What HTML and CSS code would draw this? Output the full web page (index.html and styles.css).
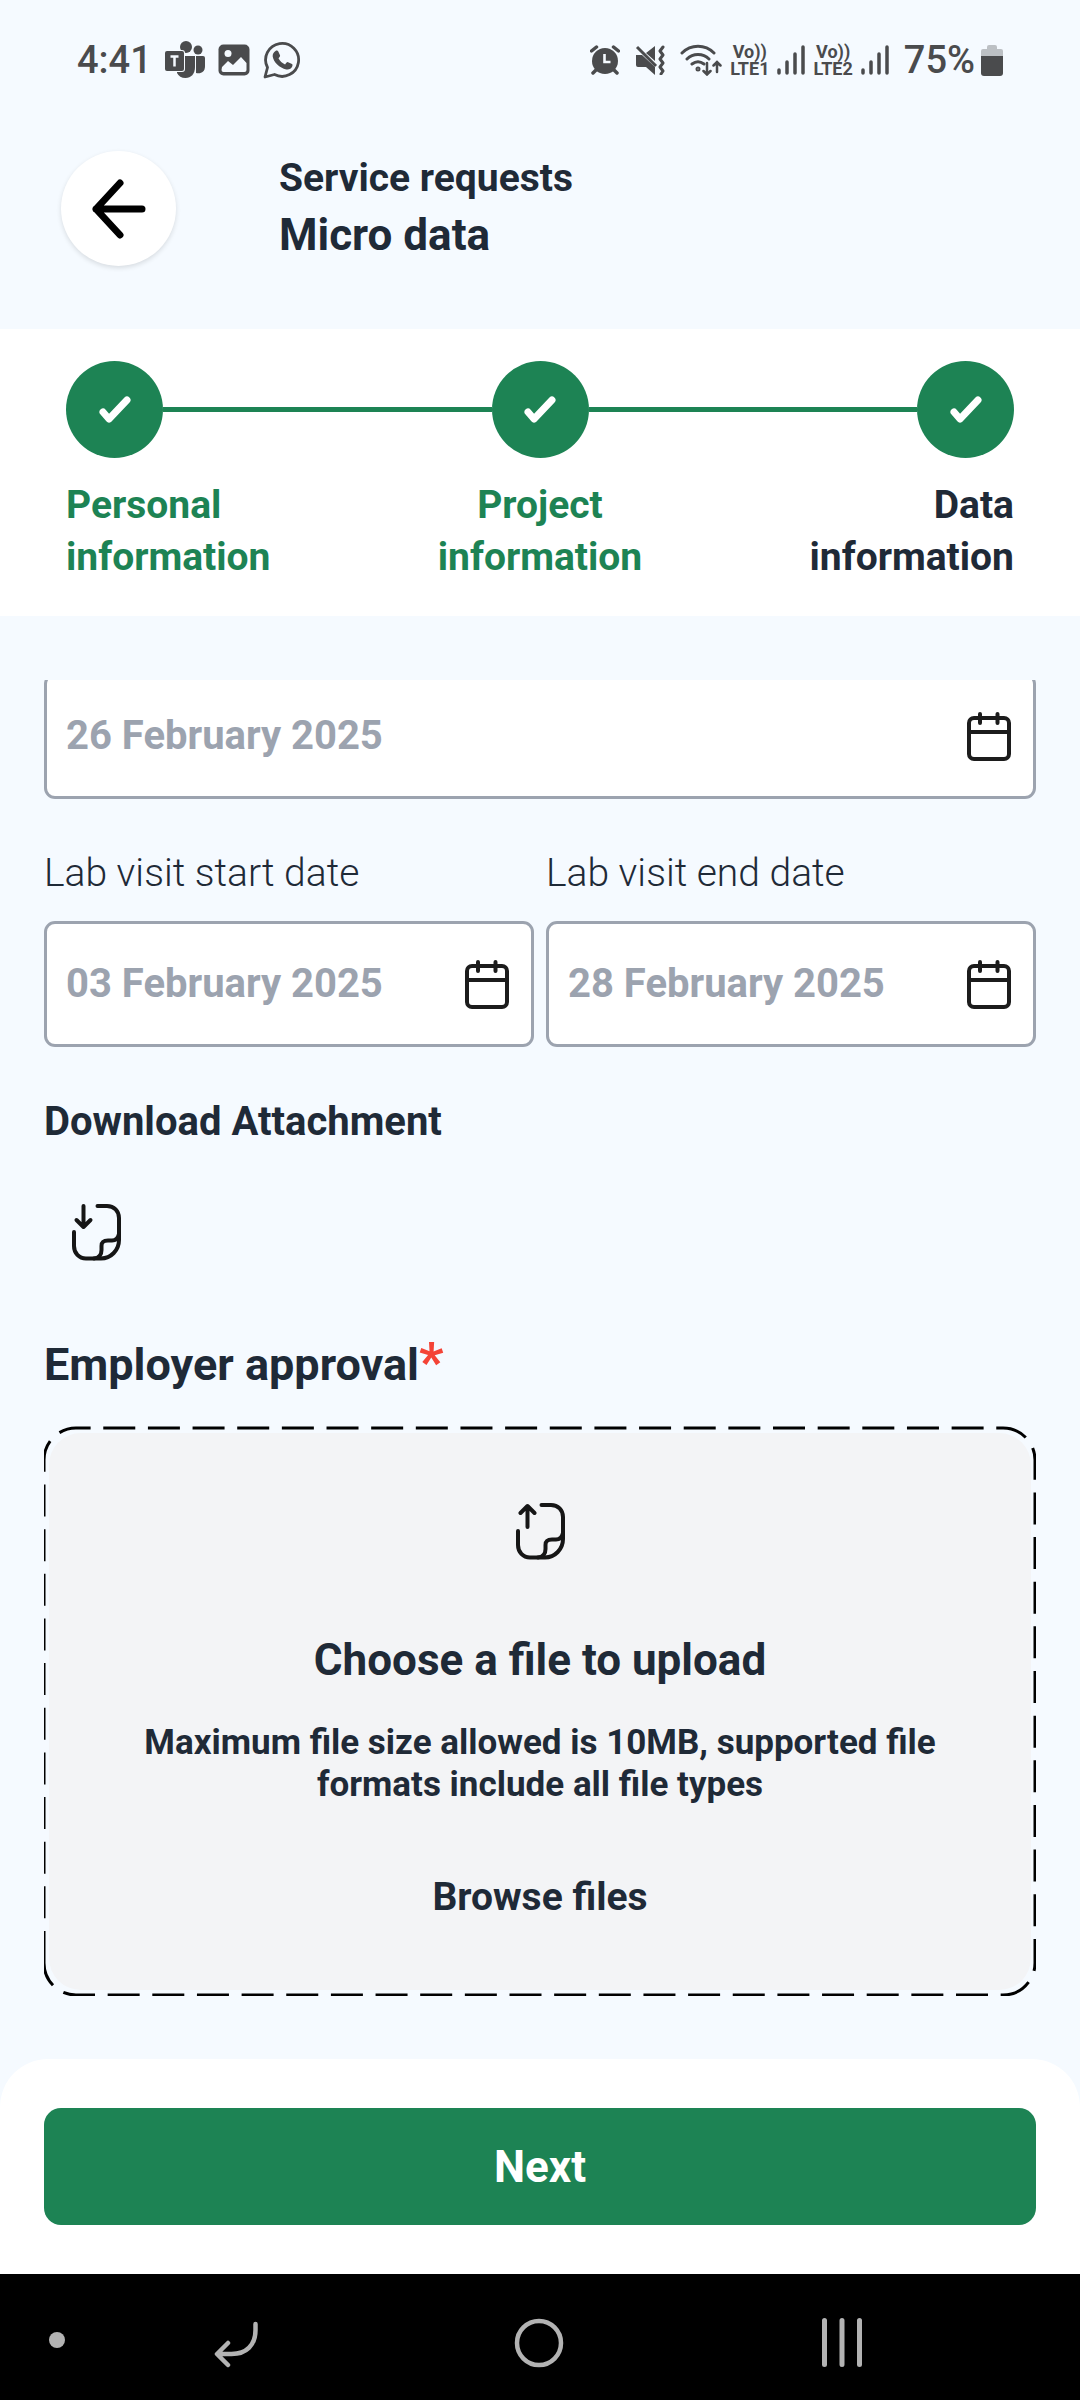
FILE: index.html
```html
<!DOCTYPE html>
<html lang="en">
<head>
  <meta charset="UTF-8">
  <meta name="viewport" content="width=device-width, initial-scale=1">
  <title>Service requests - Micro data</title>
  <link rel="stylesheet" href="styles.css">
</head>
<body>

  <!-- status bar -->
  <div class="status-bar">
    <div class="status-left">
      <span class="status-text">4:41</span>
      <svg width="40" height="38" viewBox="0 0 40 38" fill="#4a4b4d">
        <circle cx="21" cy="6" r="6"/>
        <circle cx="33" cy="9" r="4.500"/>
        <path d="M31 15h7a2 2 0 0 1 2 2v8c0 6-4 8-9 7z"/>
        <path d="M12 15h18v11c0 7-4 11-9.500 11-4 0-7-2-8.500-5z"/>
        <rect x="-1" y="9" width="21" height="22" rx="3" fill="#f5faff"/>
        <rect x="0" y="10" width="19" height="20" rx="2"/>
        <path d="M5.500 15.500h8M9.500 15.500v10" stroke="#f5faff" stroke-width="2.500" fill="none"/>
      </svg>
      <svg width="32" height="32" viewBox="0 0 32 32">
        <rect x="0.500" y="0.500" width="31" height="31" rx="5" fill="#4a4b4d"/>
        <circle cx="10" cy="9.500" r="3.500" fill="#f5faff"/>
        <path d="M4 23l6-6 5 4 8-8 5.500 6v7a2 2 0 0 1-2 2h-21a2 2 0 0 1-2-2z" fill="#f5faff"/>
      </svg>
      <svg width="38" height="38" viewBox="0 0 38 38">
        <path d="M2 36l2.500-9.500A16.500 16.500 0 1 1 11.500 33.500z" fill="none" stroke="#4a4b4d" stroke-width="2.800" stroke-linejoin="round"/>
        <path d="M12.500 10c1-.7 2.300-.6 2.800.4l1.700 3.800c.3.800-.1 1.400-1.500 3.100 1.500 3 3.600 4.900 6.600 6.100 1.600-1.900 2.100-2.600 3-2.200l3.900 1.900c.7.400.7 1.200.2 2.500-.8 2.200-3.500 3.300-5.900 2.800C16.500 27 10.500 21 9.700 15.500c-.3-2.200 1.100-4.400 2.800-5.500z" fill="#4a4b4d"/>
      </svg>
    </div>
    <div class="status-right">
      <svg width="30" height="30" viewBox="0 0 30 30">
        <circle cx="15" cy="16" r="13" fill="#4a4b4d"/>
        <path d="M1.500 6l5-4M28.500 6l-5-4M6 25l-3 3M24 25l3 3" stroke="#4a4b4d" stroke-width="3.500" stroke-linecap="round"/>
        <path d="M14.500 9v8h6" stroke="#f5faff" stroke-width="2.600" fill="none"/>
      </svg>
      <svg width="30" height="30" viewBox="0 0 30 30">
        <path d="M1 10h6l13 12v8l-9-8H3a2 2 0 0 1-2-2zM20 1v15l-9-8z" fill="#4a4b4d"/>
        <path d="M2 2l19 19" stroke="#4a4b4d" stroke-width="3"/>
        <path d="M28 2l-3 4 3 4-3 4 3 4-3 4 3 4-2 3" fill="none" stroke="#4a4b4d" stroke-width="3" stroke-linejoin="round" stroke-linecap="round"/>
      </svg>
      <div class="network">
        <svg width="42" height="32" viewBox="0 0 42 32" fill="none" stroke="#4a4b4d" stroke-width="3" stroke-linecap="round">
          <path d="M2 9C11 0 25 0 34 9M7 15c6-6 16-6 22 0M12 20c4-3 8-3 12 0"/>
          <circle cx="18" cy="25" r="1"/>
          <path d="M27 19v11M23.500 27l3.500 3.500 3.500-3.500M37 28V18M33.500 21.500L37 18l3.500 3.500" stroke-width="2.500"/>
        </svg>
        <span class="volte">Vo))<br>LTE1</span>
        <svg width="28" height="30" viewBox="0 0 28 30" stroke="#4a4b4d" stroke-width="3.500" stroke-linecap="round">
          <path d="M2 25v3M10 17v11M18 9v19M26 2v26"/>
        </svg>
        <span class="volte">Vo))<br>LTE2</span>
        <svg width="28" height="30" viewBox="0 0 28 30" stroke="#4a4b4d" stroke-width="3.500" stroke-linecap="round">
          <path d="M2 25v3M10 17v11M18 9v19M26 2v26"/>
        </svg>
      </div>
      <div class="battery">
        <span class="status-text">75%</span>
        <svg width="22" height="31" viewBox="0 0 22 31">
          <path d="M6 4V2a2 2 0 0 1 2-2h6a2 2 0 0 1 2 2v2h4a2 2 0 0 1 2 2v5H0V6a2 2 0 0 1 2-2z" fill="#bcc0c4"/>
          <path d="M0 11h22v17a3 3 0 0 1-3 3H3a3 3 0 0 1-3-3z" fill="#4a4b4d"/>
        </svg>
      </div>
    </div>
  </div>

  <header class="header">
    <button type="button" class="back-btn" aria-label="Back">
      <svg width="54" height="60" viewBox="0 0 54 60" fill="none" stroke="#000" stroke-width="7" stroke-linecap="round" stroke-linejoin="round">
        <path d="M50 30H4M28 4L4 30l24 26"/>
      </svg>
    </button>
    <div class="titles">
      <p class="subtitle">Service requests</p>
      <h1 class="title">Micro data</h1>
    </div>
  </header>

  <section class="stepper">
    <div class="track">
      <span class="step-dot"><svg width="32" height="28" viewBox="0 0 32 28"><path d="M4 16l6 7L28 4" /></svg></span>
      <span class="step-line"></span>
      <span class="step-dot"><svg width="32" height="28" viewBox="0 0 32 28"><path d="M4 16l6 7L28 4" /></svg></span>
      <span class="step-line"></span>
      <span class="step-dot"><svg width="32" height="28" viewBox="0 0 32 28"><path d="M4 16l6 7L28 4" /></svg></span>
    </div>
    <div class="step-labels">
      <span class="step-label done">Personal<br>information</span>
      <span class="step-label done">Project<br>information</span>
      <span class="step-label">Data<br>information</span>
    </div>
  </section>

  <main class="content">
    <div class="field scrolled">
      <input type="text" class="date-input" value="26 February 2025" aria-label="Date" readonly>
      <button type="button" class="icon-btn" aria-label="Pick date">
        <svg width="44" height="49" viewBox="0 0 44 49"><use href="#calendar"/></svg>
      </button>
    </div>

    <div class="row">
      <div class="col">
        <label class="label" for="startDate">Lab visit start date</label>
        <div class="field">
          <input type="text" class="date-input" id="startDate" value="03 February 2025" readonly>
          <button type="button" class="icon-btn" aria-label="Pick start date">
            <svg width="44" height="49" viewBox="0 0 44 49"><use href="#calendar"/></svg>
          </button>
        </div>
      </div>
      <div class="col">
        <label class="label" for="endDate">Lab visit end date</label>
        <div class="field">
          <input type="text" class="date-input" id="endDate" value="28 February 2025" readonly>
          <button type="button" class="icon-btn" aria-label="Pick end date">
            <svg width="44" height="49" viewBox="0 0 44 49"><use href="#calendar"/></svg>
          </button>
        </div>
      </div>
    </div>

    <h2 class="download-title">Download Attachment</h2>
    <button type="button" class="download-btn" aria-label="Download attachment">
      <svg class="file-icon" width="49" height="57" viewBox="0 0 49 57">
        <use href="#sheet"/>
        <path d="M11.500 2v21M4.500 16l7 7 7-7"/>
      </svg>
    </button>

    <h2 class="upload-title">Employer approval<span class="required">*</span></h2>
    <div class="upload">
      <svg class="upload-border" viewBox="0 0 992 570" preserveAspectRatio="none">
        <path d="M0 537V34A32 32 0 0 1 32 2H959A32 32 0 0 1 991 34V537A32 32 0 0 1 959 569H32A32 32 0 0 1 0 537"/>
      </svg>
      <div class="upload-body">
        <svg class="file-icon" width="49" height="57" viewBox="0 0 49 57">
          <use href="#sheet"/>
          <path d="M11.500 24V3M4.500 10l7-7 7 7"/>
        </svg>
        <h3 class="choose">Choose a file to upload</h3>
        <p class="hint">Maximum file size allowed is 10MB, supported file formats include all file types</p>
        <button type="button" class="browse">Browse files</button>
      </div>
    </div>
  </main>

  <footer class="footer">
    <button type="button" class="next">Next</button>
  </footer>

  <!-- system navigation -->
  <nav class="nav-bar">
    <svg viewBox="0 0 1080 126" fill="none" stroke="#b3b3b3" stroke-width="5" stroke-linecap="round" stroke-linejoin="round">
      <circle cx="57" cy="66" r="8" fill="#b3b3b3" stroke="none"/>
      <path d="M255.500 50v6c0 15-9 24-24 24h-14M228 69l-11 11 11 11" stroke-width="4.500"/>
      <circle cx="539" cy="69" r="22" stroke-width="4.500"/>
      <path d="M824.500 46.500v44M842 46.500v44M859.500 46.500v44"/>
    </svg>
  </nav>

  <!-- shared icon shapes -->
  <svg class="defs" width="0" height="0" aria-hidden="true">
    <symbol id="calendar" viewBox="0 0 44 49">
      <g fill="none" stroke="#1c1c1c" stroke-width="4" stroke-linecap="round" stroke-linejoin="round">
        <rect x="2" y="6" width="40" height="41" rx="5"/>
        <path d="M2 20h40M13 2v9M30.500 2v9"/>
      </g>
    </symbol>
    <symbol id="sheet" viewBox="0 0 49 57">
      <path d="M25.500 2H35C42 2 47 7 47 14V36C47 46 39 54.500 29 54.500H14C7 54.500 2 49 2 42V28"/>
      <path d="M47 30C46 34 44 36.500 40 36.500H36C30.500 36.500 29.500 39 29.500 42V46C29.500 51 27 54 22 54.500"/>
    </symbol>
  </svg>

</body>
</html>
```
FILE: styles.css
```css
* { box-sizing: border-box; }
body {
  margin: 0;
  min-height: 100vh;
  display: flex;
  flex-direction: column;
  background: #f5faff;
  color: #1f2a37;
  font-family: Roboto, "Noto Sans", sans-serif;
  font-size: 39px;
  font-weight: 700;
  line-height: 52px;
}
h1, h2, h3, p { margin: 0; font-weight: 700; }
button, input { font: inherit; color: inherit; border: 0; padding: 0; background: none; }
button { cursor: pointer; }
svg { display: block; flex-shrink: 0; }
.defs { position: absolute; }

/* status bar */
.status-bar { display: flex; justify-content: space-between; align-items: center; height: 120px; padding: 0 77px; color: #4a4b4d; }
.status-left { display: flex; align-items: center; gap: 13px; }
.status-right { display: flex; align-items: center; gap: 15px; }
.status-text { font-size: 38px; font-weight: 500; }
.network { display: flex; align-items: center; gap: 8px; }
.volte { font-size: 18px; line-height: 17px; text-align: center; }
.battery { display: flex; align-items: center; gap: 6px; }

/* header */
.header { display: flex; gap: 103px; padding: 31px 61px 63px; }
.back-btn { display: flex; align-items: center; justify-content: center; width: 115px; height: 115px; border-radius: 50%; background: #fff; box-shadow: 0 2px 5px rgba(0, 0, 0, 0.12); }
.subtitle { line-height: 54px; }
.title { font-size: 44px; line-height: 60px; }

/* stepper */
.stepper { background: #fff; padding: 32px 66px 33px; }
.track { display: flex; align-items: center; }
.step-dot { display: flex; align-items: center; justify-content: center; width: 97px; height: 97px; border-radius: 50%; background: #1d8354; }
.step-dot path { fill: none; stroke: #fff; stroke-width: 7; stroke-linecap: round; stroke-linejoin: round; }
.step-line { flex: 1; height: 5px; background: #1d8354; }
.step-labels { display: flex; justify-content: space-between; margin-top: 21px; }
.step-label { text-align: center; }
.step-label:first-child { text-align: left; }
.step-label:last-child { text-align: right; }
.done { color: #1d8354; }

/* form */
.content { flex: 1; margin-top: 64px; padding: 0 44px 63px; overflow: hidden; }
.field { display: flex; align-items: center; height: 126px; padding: 0 22px 0 19px; background: #fff; border: 3px solid #9ca3af; border-radius: 11px; }
.scrolled { margin-top: -7px; }
.date-input { flex: 1; min-width: 0; font-size: 40px; color: #9ca3af; }
.row { display: flex; gap: 12px; margin-top: 48px; }
.col { flex: 1; min-width: 0; }
.label { display: block; margin-bottom: 22px; font-weight: 300; }
.download-title { margin-top: 49px; font-size: 40px; }
.download-btn { display: flex; align-items: center; justify-content: center; width: 105px; height: 105px; margin: 32px 0 50px; }
.file-icon { fill: none; stroke: #161616; stroke-width: 4; stroke-linecap: round; stroke-linejoin: round; }
.upload-title { font-size: 45px; line-height: 60px; }
.required { font-size: 54px; line-height: 0; color: #f44336; }

/* upload area, dashed outline drawn over the padding */
.upload { position: relative; margin-top: 31px; padding: 7px 5px 6px; }
.upload-border { position: absolute; inset: 0; width: 100%; height: 100%; overflow: hidden; }
.upload-border path { fill: none; stroke: #000; stroke-width: 3; stroke-dasharray: 32 12.65; vector-effect: non-scaling-stroke; }
.upload-body { position: relative; display: flex; flex-direction: column; align-items: center; padding: 70px 80px 67px; background: #f3f4f6; border-radius: 32px; text-align: center; }
.choose { margin-top: 70px; font-size: 44px; line-height: 60px; }
.hint { margin-top: 32px; font-size: 35px; line-height: 42px; }
.browse { margin-top: 65px; }

/* footer */
.footer { padding: 49px 44px; background: #fff; border-radius: 48px 48px 0 0; }
.next { display: block; width: 100%; height: 117px; border-radius: 17px; background: #1d8354; color: #fff; font-size: 44px; }
.nav-bar { background: #000; }
.nav-bar svg { width: 100%; }
```
